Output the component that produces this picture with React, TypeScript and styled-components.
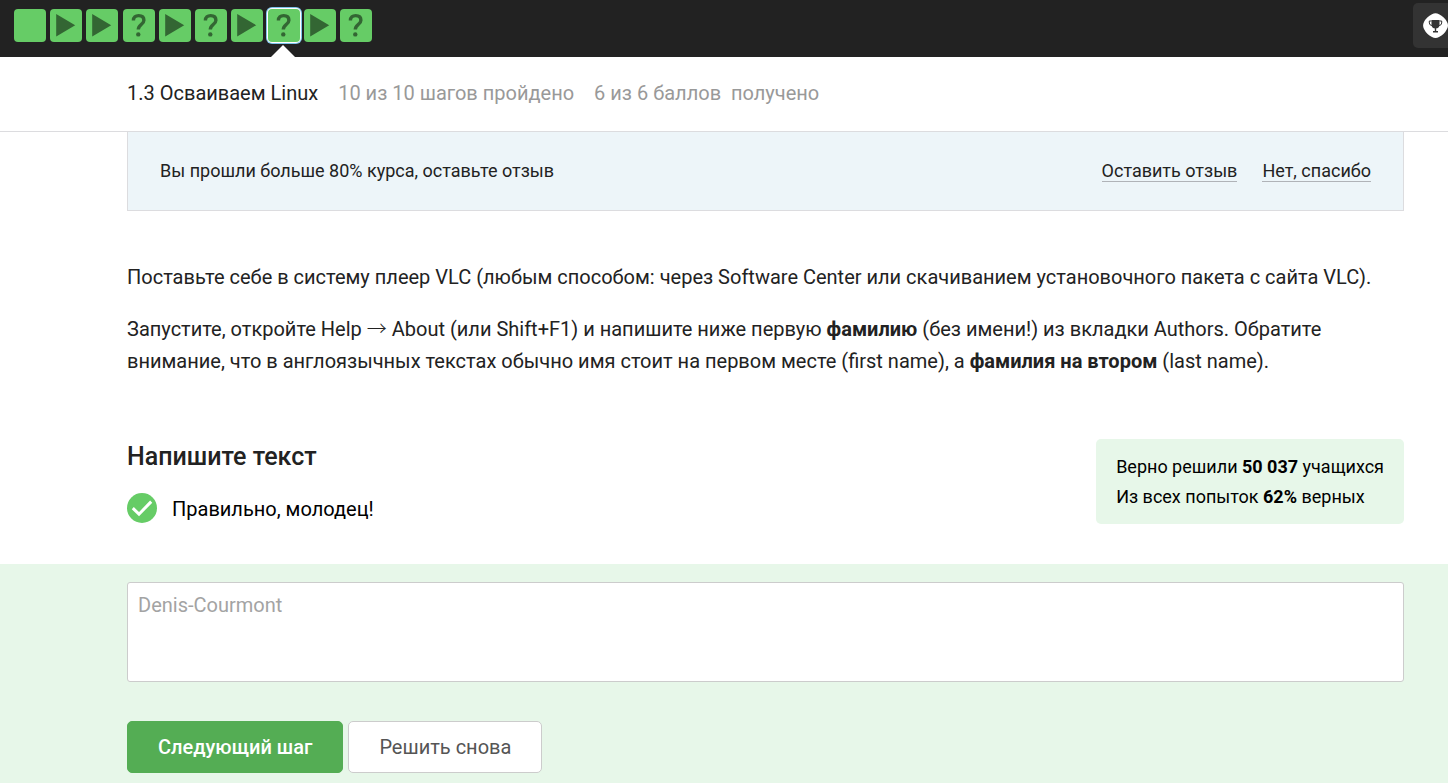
import React from "react";
import styled, { createGlobalStyle, css } from "styled-components";

const GlobalStyle = createGlobalStyle`
  *, *::before, *::after { box-sizing: border-box; }
  body {
    margin: 0;
    background: #fff;
    color: #222;
    font-family: Roboto, "Liberation Sans", sans-serif;
    font-size: 20px;
    line-height: 32px;
  }
  p, h1, h2 { margin: 0; }
`;

const Page = styled.div`
  display: flex;
  flex-direction: column;
  min-height: 100vh;
`;

const TopBar = styled.header`
  display: flex;
  align-items: flex-start;
  justify-content: space-between;
  height: 57px;
  padding-left: 14px;
  background: #222;
  overflow: hidden;
`;

const Steps = styled.nav`
  display: flex;
  justify-content: space-between;
  width: 358px;
  padding-top: 9px;
`;

const Step = styled.a<{ $active?: boolean }>`
  position: relative;
  display: block;
  width: 32px;
  height: 33px;
  border-radius: 4px;
  background: #66cc66;

  svg {
    display: block;
    width: 32px;
    height: 33px;
  }

  ${(p) =>
    p.$active &&
    css`
      box-shadow: 0 0 0 1px #fff, 0 0 0 2px #7ec3ea;

      &::after {
        content: "";
        position: absolute;
        top: 36px;
        left: 3px;
        border: 12px solid transparent;
        border-top: 0;
        border-bottom-color: #fff;
      }
    `}
`;

const Awards = styled.button`
  display: flex;
  align-items: center;
  width: 35px;
  height: 45px;
  margin-top: 3px;
  padding: 0 0 0 10px;
  border: 0;
  border-radius: 5px 0 0 5px;
  background: #333;

  svg {
    flex: none;
  }
`;

const Lesson = styled.div`
  display: flex;
  align-items: center;
  gap: 20px;
  height: 75px;
  padding: 0 44px 2px 127px;
  border-bottom: 1px solid #dcdcdf;
`;

const LessonTitle = styled.h1`
  font-size: 20px;
  font-weight: 400;
`;

const LessonInfo = styled.span`
  color: #999;
  white-space: pre;
`;

const Main = styled.main`
  padding: 0 44px 0 127px;
`;

const Review = styled.aside`
  display: flex;
  align-items: center;
  justify-content: space-between;
  height: 79px;
  padding: 0 32px;
  border: 1px solid #dcdcdf;
  border-top: 0;
  background: #edf5f9;
  font-size: 18px;
  line-height: 20px;
`;

const ReviewLinks = styled.div`
  display: flex;
  gap: 25px;
`;

const ReviewLink = styled.a`
  border-bottom: 1px solid #b0b3b8;
  color: #222;
  text-decoration: none;
`;

const Task = styled.section`
  display: flex;
  flex-direction: column;
  gap: 20px;
  padding-top: 50px;
`;

const Arrow = styled.span`
  font-family: "Noto Sans CJK JP", sans-serif;
  font-weight: 300;
  line-height: 20px;
`;

const Result = styled.section`
  display: flex;
  align-items: flex-start;
  justify-content: space-between;
  padding: 62px 0 39px;
`;

const ResultTitle = styled.h2`
  padding-top: 2px;
  font-size: 25px;
  font-weight: 500;
`;

const Verdict = styled.p`
  display: flex;
  align-items: flex-start;
  gap: 15px;
  padding-top: 20px;
  color: #000;
`;

const Stats = styled.div`
  padding: 13px 20px 12px;
  border-radius: 5px;
  background: #e7f7e9;
  color: #000;
  font-size: 18px;
  line-height: 30px;
`;

const Answer = styled.form`
  display: flex;
  flex: 1;
  flex-direction: column;
  gap: 39px;
  padding: 18px 44px 10px 127px;
  background: #e7f7e9;
`;

const AnswerText = styled.textarea`
  display: block;
  width: 100%;
  height: 100px;
  padding: 6px 10px;
  border: 1px solid #ccc;
  border-radius: 3px;
  background: #fff;
  color: #a3a3a3;
  font: inherit;
  resize: none;
`;

const Actions = styled.div`
  display: flex;
  gap: 5px;
`;

const Button = styled.button<{ $primary?: boolean }>`
  height: 52px;
  padding: 0 30px;
  border: 1px solid ${(p) => (p.$primary ? "#54ad54" : "#ccc")};
  border-radius: 5px;
  background: ${(p) => (p.$primary ? "#54ad54" : "#fff")};
  color: ${(p) => (p.$primary ? "#fff" : "#555")};
  font: inherit;
  font-weight: ${(p) => (p.$primary ? 500 : 400)};
`;

type Kind = "text" | "video" | "quiz";

const steps: Kind[] = [
  "text", "video", "video", "quiz", "video",
  "quiz", "video", "quiz", "video", "quiz",
];
const current = 7;

function StepIcon({ kind }: { kind: Kind }) {
  if (kind === "video") {
    return (
      <svg viewBox="0 0 32 33" aria-hidden="true">
        <path d="M6.2 5 25.2 16.2 6.2 27.5Z" fill="#336633" />
      </svg>
    );
  }
  if (kind === "quiz") {
    return (
      <svg viewBox="0 0 32 33" aria-hidden="true">
        <path
          d="M10.4 11.4C10.4 8.2 12.6 6.6 15.7 6.6s5.2 1.7 5.2 4.6c0 4.4-5.6 4.4-5.6 9.4"
          fill="none"
          stroke="#336633"
          strokeWidth="3.4"
        />
        <circle cx="15.3" cy="25.4" r="2.2" fill="#336633" />
      </svg>
    );
  }
  return null;
}

export default function App() {
  return (
    <Page>
      <GlobalStyle />
      <TopBar>
        <Steps aria-label="Шаги урока">
          {steps.map((kind, i) => (
            <Step
              key={i}
              href={`#step-${i + 1}`}
              aria-label={`Шаг ${i + 1}`}
              aria-current={i === current ? "step" : undefined}
              $active={i === current}
            >
              <StepIcon kind={kind} />
            </Step>
          ))}
        </Steps>
        <Awards type="button" aria-label="Награды">
          <svg width="26" height="26" viewBox="0 0 26 26" aria-hidden="true">
            <path
              d="M9 1.2Q12.5-.6 16 1.2q5.4 2.4 8 7.8 2 3.5 0 7-2.6 5.4-8 8-3.5 1.8-7 0Q3.6 21.4 1 16q-1.8-3.5 0-7 2.6-5.4 8-7.8Z"
              fill="#fff"
            />
            <path d="M8.5 7h8v4.6a4 4 0 0 1-8 0ZM11.8 14.5h1.4v3.5h-1.4ZM10 18h5v1.6h-5Z" fill="#333" />
            <path d="M8.5 8H6.3v2Q6.5 12.5 9.2 12.6M16.5 8h2.2v2Q18.5 12.5 15.8 12.6" fill="none" stroke="#333" />
          </svg>
        </Awards>
      </TopBar>

      <Lesson>
        <LessonTitle>1.3 Осваиваем Linux</LessonTitle>
        <LessonInfo>10 из 10 шагов пройдено</LessonInfo>
        <LessonInfo>{"6 из 6 баллов  получено"}</LessonInfo>
      </Lesson>

      <Main>
        <Review>
          <p>Вы прошли больше 80% курса, оставьте отзыв</p>
          <ReviewLinks>
            <ReviewLink href="#review">Оставить отзыв</ReviewLink>
            <ReviewLink href="#dismiss">Нет, спасибо</ReviewLink>
          </ReviewLinks>
        </Review>

        <Task>
          <p>
            Поставьте себе в систему плеер VLC (любым способом: через Software Center или
            скачиванием установочного пакета с сайта VLC).
          </p>
          <p>
            Запустите, откройте Help <Arrow>→</Arrow> About (или Shift+F1) и напишите ниже
            первую <b>фамилию</b> (без имени!) из вкладки Authors. Обратите внимание, что в
            англоязычных текстах обычно имя стоит на первом месте (first name), а{" "}
            <b>фамилия на втором</b> (last name).
          </p>
        </Task>

        <Result>
          <div>
            <ResultTitle id="answer-title">Напишите текст</ResultTitle>
            <Verdict>
              <svg width="30" height="30" viewBox="0 0 30 30" aria-hidden="true">
                <circle cx="15" cy="15" r="15" fill="#66cc66" />
                <path d="m5.8 15.2 6.2 6L24.2 8.6" fill="none" stroke="#fff" strokeWidth="3" />
              </svg>
              Правильно, молодец!
            </Verdict>
          </div>
          <Stats>
            <p>Верно решили <b>50 037</b> учащихся</p>
            <p>Из всех попыток <b>62%</b> верных</p>
          </Stats>
        </Result>
      </Main>

      <Answer onSubmit={(e) => e.preventDefault()}>
        <AnswerText aria-labelledby="answer-title" defaultValue="Denis-Courmont" readOnly />
        <Actions>
          <Button type="submit" $primary>Следующий шаг</Button>
          <Button type="button">Решить снова</Button>
        </Actions>
      </Answer>
    </Page>
  );
}
